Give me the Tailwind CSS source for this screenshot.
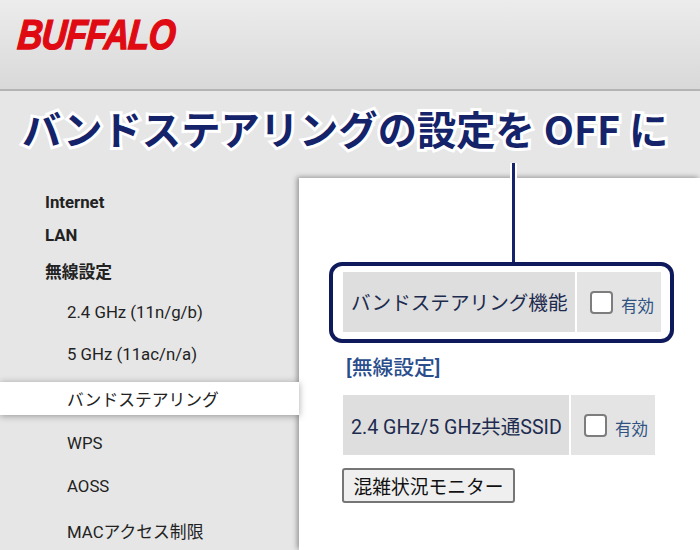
<!DOCTYPE html>
<html lang="ja">
<head>
  <meta charset="UTF-8">
  <title>バンドステアリングの設定</title>
  <script src="https://cdn.jsdelivr.net/npm/@tailwindcss/browser@4"></script>
</head>
<body class="w-[700px] h-[550px] overflow-hidden bg-[#e6e6e6] font-['Roboto','Noto_Sans_CJK_JP',sans-serif]">
  <div class="relative w-[700px] h-[550px] overflow-hidden">
    <!-- Header -->
    <header class="h-[91px] pl-[18px] pt-[13px] bg-gradient-to-b from-[#ececec] to-[#d9d9d9] border-b-[2px] border-[#b4b4b4]">
      <div class="w-fit origin-left scale-x-[0.82] -skew-x-[6deg] font-['Liberation_Sans',sans-serif] italic font-bold text-[42px] leading-[44px] tracking-[-1px] text-[#df0a12] [-webkit-text-stroke:1.4px_#df0a12]">BUFFALO</div>
    </header>

    <!-- Title -->
    <h1 class="h-[87px] pl-[22px] pt-[12px] font-['Noto_Sans_CJK_JP',sans-serif] font-bold text-[39.3px] leading-[50px] whitespace-nowrap text-[#14236a] [paint-order:stroke_fill] [-webkit-text-stroke:6px_#ffffff]">バンドステアリングの設定を OFF に</h1>

    <div class="flex h-[372px]">
      <!-- Sidebar -->
      <nav class="w-[299px] shrink-0 text-[16.8px] text-[#222222]">
        <div class="h-[47px] pl-[45px] pt-[14px] leading-[20px] font-bold">Internet</div>
        <div class="h-[34px] pl-[45px] leading-[20px] font-bold">LAN</div>
        <div class="h-[40px] pl-[45px] pt-[3px] leading-[20px] font-bold">無線設定</div>
        <div class="h-[42px] pl-[67px] pt-[3px] leading-[20px]">2.4 GHz (11n/g/b)</div>
        <div class="h-[41px] pl-[67px] pt-[3px] leading-[20px]">5 GHz (11ac/n/a)</div>
        <div class="relative h-[33px] pl-[67px] pt-[8px] leading-[20px] bg-white shadow-[0_1px_7px_rgba(0,0,0,0.35)]">バンドステアリング</div>
        <div class="h-[46px] pl-[67px] pt-[18px] leading-[20px]">WPS</div>
        <div class="h-[43px] pl-[67px] pt-[15px] leading-[20px]">AOSS</div>
        <div class="h-[46px] pl-[67px] pt-[18px] leading-[20px]">MACアクセス制限</div>
      </nav>

      <!-- Main panel -->
      <main class="flex-1 bg-white shadow-[-2px_-1px_5px_rgba(0,0,0,0.35)] pl-[44px] pt-[94px] text-[#1d2b4f]">
        <div class="flex h-[60px] gap-[2px]">
          <div class="w-[232px] flex items-center pl-[8px] pt-[4px] bg-[#dedede] text-[19.6px] whitespace-nowrap">バンドステアリング機能</div>
          <div class="w-[84px] flex items-center pl-[13px] bg-[#e4e4e4]">
            <span class="w-[23px] h-[23px] rounded-[4px] border-2 border-[#7d7d7d] bg-white"></span>
            <span class="ml-[8px] mt-[10px] text-[16.5px] text-[#2f5282] whitespace-nowrap">有効</span>
          </div>
        </div>
        <div class="mt-[21px] h-[42px] pl-[3px] text-[20.8px] leading-[30px] font-medium text-[#2a4d8c]">[無線設定]</div>
        <div class="flex h-[60px] gap-[2px]">
          <div class="w-[226px] flex items-center pl-[8px] pt-[5px] bg-[#dedede] text-[19.6px] whitespace-nowrap">2.4 GHz/5 GHz共通SSID</div>
          <div class="w-[84px] flex items-center pl-[13px] bg-[#e4e4e4]">
            <span class="w-[23px] h-[23px] rounded-[4px] border-2 border-[#7d7d7d] bg-white"></span>
            <span class="ml-[8px] mt-[10px] text-[16.5px] text-[#2f5282] whitespace-nowrap">有効</span>
          </div>
        </div>
        <button class="block mt-[13px] -ml-[1px] w-[173px] h-[35px] pt-[4px] rounded-[3px] border-2 border-[#767676] bg-[#efefef] text-[18.75px] text-[#111111] whitespace-nowrap">混雑状況モニター</button>
      </main>
    </div>

    <!-- Callout -->
    <div class="absolute left-[329px] top-[262px] w-[345px] h-[81px] rounded-[13px] border-[4px] border-[#0e1a5c]"></div>
    <div class="absolute left-[510px] top-[163px] w-[7px] h-[99px] bg-[#14236a] border-x-2 border-white"></div>
  </div>
</body>
</html>
